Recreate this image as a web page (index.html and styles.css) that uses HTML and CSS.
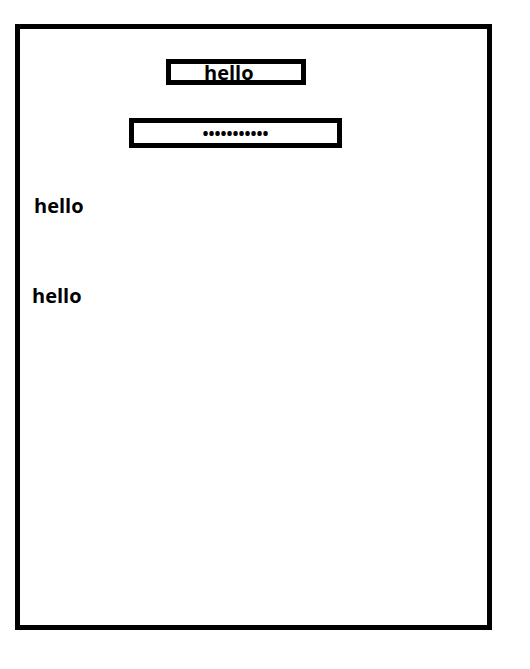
FILE: index.html
```html
<!DOCTYPE html>
<html lang="en">
<head>
    <meta charset="UTF-8">
    <meta name="viewport" content="width=device-width, initial-scale=1.0">
    <title>Login</title>
    <link rel="stylesheet" href="styles.css">
</head>
<body>
    <div class="frame">
        <input class="field user" type="text" value="hello" readonly>
        <input class="field pass" type="password" value="hello123456" readonly>
        <p class="label first">hello</p>
        <p class="label second">hello</p>
    </div>
</body>
</html>
```

FILE: styles.css
```css
body {
    margin: 0;
    padding: 0;
    background: #fff;
    font-family: 'Open Sans', 'Liberation Sans', sans-serif;
    color: #000;
}
.frame {
    box-sizing: border-box;
    width: 477px;
    height: 606px;
    margin: 24px 0 0 15px;
    border: 5px solid #000;
    display: flex;
    flex-direction: column;
    align-items: flex-start;
}
.field {
    box-sizing: border-box;
    border: 5px solid #000;
    border-radius: 0;
    padding: 0;
    outline: none;
    background: #fff;
    color: #000;
    font-family: inherit;
    font-weight: bold;
    font-size: 20px;
}
.user {
    width: 140px;
    height: 26px;
    margin: 30px 0 0 146px;
    padding-left: 33px;
    text-align: left;
}
.pass {
    width: 213px;
    height: 30px;
    margin: 33px 0 0 109px;
    text-align: center;
    font-size: 16px;
}
.label {
    margin: 0;
    font-size: 20px;
    font-weight: bold;
    line-height: 24px;
}
.first {
    margin: 46px 0 0 14px;
}
.second {
    margin: 66px 0 0 12px;
}
```
